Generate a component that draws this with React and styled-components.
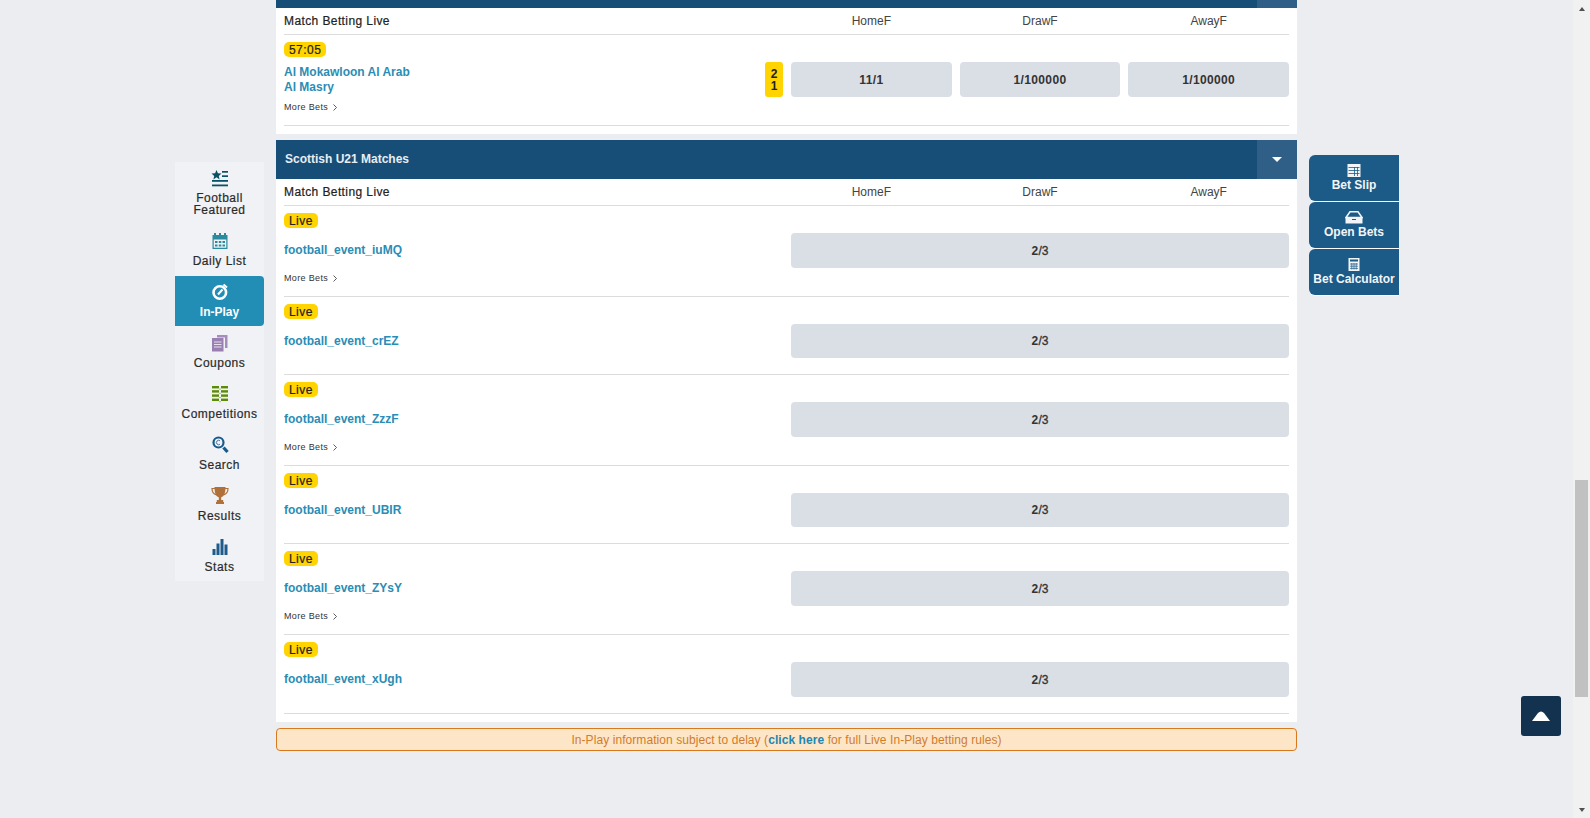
import styled, { createGlobalStyle } from 'styled-components';

const Global = createGlobalStyle`
  html, body {
    margin: 0;
    height: 100%;
    overflow: hidden;
    background: #ecedf1;
    font-family: "Liberation Sans", Arial, sans-serif;
    font-size: 12px;
    color: #222;
  }
`;

const Shell = styled.div`
  display: flex;
  height: 100vh;
  overflow: hidden;
`;

const Page = styled.div`
  position: relative;
  flex: 1;
  display: flex;
  align-items: flex-start;
  padding-left: 175px;
  gap: 12px;
  overflow: hidden;
`;

const SideNav = styled.nav`
  width: 89px;
  margin-top: 162px;
  display: flex;
  flex-direction: column;
  flex: none;
`;

const NavItem = styled.a`
  height: ${(p) => p.$height}px;
  box-sizing: border-box;
  padding-top: ${(p) => (p.$active ? 7 : 8)}px;
  display: flex;
  flex-direction: column;
  align-items: center;
  background: ${(p) => (p.$active ? '#228db5' : '#f0f2f5')};
  border-radius: ${(p) => (p.$active ? '0 4px 4px 0' : '0')};
  color: ${(p) => (p.$active ? '#fff' : '#2a2a2a')};
  font-weight: ${(p) => (p.$active ? 'bold' : 'normal')};
  -webkit-text-stroke: ${(p) => (p.$active ? '0' : '0.2px')};
  text-align: center;
  line-height: 12px;
  letter-spacing: ${(p) => (p.$active ? '0' : '0.5px')};

  svg {
    width: 18px;
    height: 18px;
    margin-bottom: ${(p) => (p.$tight ? 4 : 5)}px;
    flex: none;
  }
`;

const Content = styled.main`
  width: 1021px;
  flex: none;
  margin-top: -31px;
`;

const Section = styled.section`
  background: #fff;
  margin-bottom: 6px;
  padding-bottom: 8px;
`;

const SectionHead = styled.div`
  height: 39px;
  display: flex;
  align-items: center;
  justify-content: space-between;
  padding-left: 9px;
  background: #174e78;
  color: #e8edf2;
  font-weight: bold;
`;

const HeadTitle = styled.span`
  margin-bottom: 2px;
`;

const Toggle = styled.span`
  width: 40px;
  height: 100%;
  display: flex;
  align-items: center;
  justify-content: center;
  background: #2f5f86;

  &::after {
    content: '';
    border-left: 5.5px solid transparent;
    border-right: 5.5px solid transparent;
    border-top: 5px solid #fff;
  }
`;

const Body = styled.div`
  margin: 0 8px;
`;

const MarketHead = styled.div`
  height: 26px;
  display: flex;
  align-items: center;
  border-bottom: 1px solid #dcdcdc;
  color: #444;
`;

const MarketName = styled.span`
  flex: 1;
  color: #222;
  letter-spacing: 0.4px;
  -webkit-text-stroke: 0.2px;
`;

const ColLabel = styled.span`
  width: 160.67px;
  margin-left: 8px;
  text-align: center;
`;

const Row = styled.div`
  padding: 7px 0 ${(p) => p.$bottom || 15}px;
  border-bottom: 1px solid #dcdcdc;
`;

const Badge = styled.span`
  display: block;
  width: fit-content;
  height: 15px;
  line-height: 16px;
  padding: 0 5px;
  border-radius: 5px;
  background: #ffd400;
  color: #222;
  letter-spacing: 0.45px;
  -webkit-text-stroke: 0.2px;
`;

const MatchLine = styled.div`
  display: flex;
  align-items: center;
  height: ${(p) => (p.$compact ? 34 : 35)}px;
  margin-top: 5px;
`;

const Teams = styled.a`
  flex: 1;
  color: #2a8db5;
  font-weight: bold;
  line-height: 15px;
`;

const Score = styled.span`
  width: 18px;
  height: 35px;
  margin-right: 8px;
  display: flex;
  flex-direction: column;
  align-items: center;
  justify-content: center;
  border-radius: 3px;
  background: #ffd400;
  font-weight: bold;
  line-height: 12px;
`;

const Odds = styled.button`
  width: ${(p) => (p.$wide ? '498px' : '160.67px')};
  height: 100%;
  margin-left: ${(p) => (p.$gap ? '8px' : '0')};
  padding: 0;
  border: 0;
  border-radius: 4px;
  background: #dadee5;
  font: bold 12px "Liberation Sans", Arial, sans-serif;
  letter-spacing: 0.35px;
  color: #333;
`;

const OddsRest = styled.span`
  font-weight: normal;
  -webkit-text-stroke: 0.3px;
  letter-spacing: 0;
`;

const MoreBets = styled.a`
  display: flex;
  align-items: center;
  gap: 5px;
  height: 13px;
  line-height: 13px;
  margin: 4px 0 -4px;
  font-size: 9px;
  letter-spacing: 0.35px;
  color: #333;

  svg {
    width: 4px;
    height: 7px;
  }
`;

const Notice = styled.div`
  height: 23px;
  line-height: 22px;
  box-sizing: border-box;
  border: 1px solid #d9791e;
  border-radius: 4px;
  background: #fde6c8;
  color: #d17c2c;
  text-align: center;
  letter-spacing: 0.07px;

  a {
    color: #1f86b0;
    font-weight: bold;
  }
`;

const BetTools = styled.aside`
  width: 90px;
  margin-top: 155px;
  flex: none;
  display: flex;
  flex-direction: column;
  gap: 1px;
`;

const ToolButton = styled.a`
  height: 46px;
  box-sizing: border-box;
  padding-top: 9px;
  display: flex;
  flex-direction: column;
  align-items: center;
  background: #1c5a87;
  color: #f2f5f8;
  font-weight: bold;
  line-height: 12px;
  border-radius: 6px 0 0 6px;
  box-shadow: 0 1px 0 #fbfcfd;

  svg {
    width: ${(p) => p.$iconWidth || 14}px;
    height: 13px;
    margin-bottom: 2px;
    flex: none;
  }
`;

const ScrollTop = styled.button`
  position: absolute;
  left: 1521px;
  top: 696px;
  width: 40px;
  height: 40px;
  padding: 0;
  border: 0;
  border-radius: 3px;
  background: #12324f;
  display: flex;
  align-items: center;
  justify-content: center;

  svg {
    width: 18px;
    height: 10px;
  }
`;

const ScrollBar = styled.div`
  width: 17px;
  flex: none;
  background: #f1f1f1;
  display: flex;
  flex-direction: column;
  align-items: center;
`;

const Arrow = styled.span`
  flex: none;
  width: 0;
  height: 0;
  margin: ${(p) => (p.$up ? '7px 0 0' : 'auto 0 6px')};
  border-left: 3.5px solid transparent;
  border-right: 3.5px solid transparent;
  ${(p) => (p.$up ? 'border-bottom: 4px solid #505050;' : 'border-top: 4px solid #505050;')}
`;

const Thumb = styled.div`
  width: 13px;
  height: 217px;
  margin-top: 469px;
  background: #c1c1c1;
  flex: none;
`;

const FeaturedIcon = () => (
  <svg viewBox="0 0 18 18" fill="#0b5166">
    <path d="M5.500 0l1.400 3.300 3.600.3-2.700 2.300.8 3.500L5.500 7.300 2.400 9.400l.8-3.500L.5 3.600l3.600-.3z" />
    <rect x="11" y="1" width="6" height="1.700" />
    <rect x="11" y="5.300" width="6" height="1.700" />
    <rect x="1" y="10" width="16" height="1.800" />
    <rect x="1" y="14.500" width="16" height="1.800" />
  </svg>
);

const CalendarIcon = () => (
  <svg viewBox="0 0 18 18" fill="#2a8a9f">
    <path d="M1.500 3H3V1h2v2h3V1h2v2h3V1h2v2h1.500v14h-15zm1.200 4.500v8.300h12.600V7.500z" />
    <rect x="4" y="9" width="2.500" height="2" />
    <rect x="7.800" y="9" width="2.500" height="2" />
    <rect x="11.500" y="9" width="2.500" height="2" />
    <rect x="4" y="12.500" width="2.500" height="2" />
    <rect x="7.800" y="12.500" width="2.500" height="2" />
    <rect x="11.500" y="12.500" width="2.500" height="2" />
  </svg>
);

const WatchIcon = () => (
  <svg viewBox="0 0 18 18" fill="none" stroke="#fff">
    <circle cx="8.800" cy="9.500" r="6.300" strokeWidth="2.600" />
    <path d="M7 11.500L11.500 6.500" strokeWidth="2" />
    <path d="M12.500 1.500l3.500 3" strokeWidth="2" />
  </svg>
);

const CouponIcon = () => (
  <svg viewBox="0 0 18 18">
    <path d="M6 1h10.500v13H14V3.500H6z" fill="#a58cbd" />
    <path d="M1 4h11.500v13.500H1z" fill="#9a7fb3" />
    <path d="M3 8h7.500M3 10.500h7.500M3 13h7.500" stroke="#e8e0ef" strokeWidth="1" />
  </svg>
);

const CompetitionIcon = () => (
  <svg viewBox="0 0 18 18" fill="#5c8c04">
    {[1, 5.2, 9.4, 13.600].map((y) => (
      <g key={y}>
        <rect x="1" y={y} width="7" height="2.400" />
        <rect x="10" y={y} width="7" height="2.400" />
        <rect x="8.500" y={y + 2.600} width="1" height="1" />
      </g>
    ))}
  </svg>
);

const SearchIcon = () => (
  <svg viewBox="0 0 18 18" fill="none" stroke="#175a8c">
    <circle cx="7.500" cy="6.500" r="5" strokeWidth="2.200" />
    <path d="M9 4.800a2.200 2.200 0 1 0 0 3.400" strokeWidth=".8" />
    <path d="M12.500 11.500l4 4.500" strokeWidth="3.200" />
  </svg>
);

const TrophyIcon = () => (
  <svg viewBox="0 0 18 18">
    <path d="M3.500 0h11c0 5.500-1 9-4.300 10.300V13h2v2H13v2H5v-2h.800v-2h2v-2.700C4.500 9 3.500 5.500 3.500 0z" fill="#b0703a" />
    <path d="M4 1.500H1c0 3.500 1.800 5.500 4.500 6.300M14 1.500h3c0 3.500-1.800 5.500-4.500 6.300" fill="none" stroke="#b0703a" strokeWidth="1.200" />
  </svg>
);

const StatsIcon = () => (
  <svg viewBox="0 0 18 18" fill="#1e5a8a">
    <rect x="1.500" y="11" width="3" height="6" />
    <rect x="5.500" y="5.500" width="3" height="11.500" />
    <rect x="9.500" y="1" width="3" height="16" />
    <rect x="13.500" y="6.500" width="3" height="10.500" />
  </svg>
);

const SlipIcon = () => (
  <svg viewBox="0 0 14 13">
    <rect x="0.500" y="0" width="13" height="13" fill="#f2f5f8" />
    <path d="M7.500 3v9M10.500 3v9M1.500 3.500h11M1.500 6.500h11M1.500 9.500h11" stroke="#1c5a87" strokeWidth=".8" />
  </svg>
);

const TrayIcon = () => (
  <svg viewBox="0 0 18 13">
    <path d="M5 .8h8l4 5.700H1z" fill="none" stroke="#f2f5f8" strokeWidth="1.500" />
    <path d="M.500 6.500h17V12.500H.500z" fill="#f2f5f8" />
    <rect x="7" y="8" width="4" height="1" fill="#1c5a87" />
  </svg>
);

const CalcIcon = () => (
  <svg viewBox="0 0 14 13">
    <rect x="1.500" y="0" width="11" height="13" fill="#f2f5f8" />
    <rect x="3" y="1.500" width="8" height="2" fill="#1c5a87" />
    <path d="M3 6h8M3 8.200h8M3 10.400h8M4.800 5v6.500M7 5v6.500M9.200 5v6.500" stroke="#1c5a87" strokeWidth=".7" />
  </svg>
);

const Chevron = () => (
  <svg viewBox="0 0 4 7" fill="none" stroke="#333" strokeWidth=".8">
    <path d="M.5 .5l3 3-3 3" />
  </svg>
);

const navItems = [
  { label: <>Football<br />Featured</>, icon: <FeaturedIcon />, height: 62, tight: true },
  { label: 'Daily List', icon: <CalendarIcon />, height: 52 },
  { label: 'In-Play', icon: <WatchIcon />, height: 50, active: true },
  { label: 'Coupons', icon: <CouponIcon />, height: 51 },
  { label: 'Competitions', icon: <CompetitionIcon />, height: 51 },
  { label: 'Search', icon: <SearchIcon />, height: 51 },
  { label: 'Results', icon: <TrophyIcon />, height: 51 },
  { label: 'Stats', icon: <StatsIcon />, height: 51 },
];

const events = [
  { name: 'football_event_iuMQ', more: true },
  { name: 'football_event_crEZ', compact: true, bottom: 16 },
  { name: 'football_event_ZzzF', more: true },
  { name: 'football_event_UBIR', compact: true, bottom: 16 },
  { name: 'football_event_ZYsY', more: true },
  { name: 'football_event_xUgh', bottom: 16 },
];

function Market() {
  return (
    <MarketHead>
      <MarketName>Match Betting Live</MarketName>
      <ColLabel>HomeF</ColLabel>
      <ColLabel>DrawF</ColLabel>
      <ColLabel>AwayF</ColLabel>
    </MarketHead>
  );
}

function More() {
  return <MoreBets>More Bets <Chevron /></MoreBets>;
}

export default function App() {
  return (
    <Shell>
      <Global />
      <Page>
        <SideNav>
          {navItems.map((item, i) => (
            <NavItem key={i} $height={item.height} $tight={item.tight} $active={item.active}>
              {item.icon}
              {item.label}
            </NavItem>
          ))}
        </SideNav>

        <Content>
          <Section>
            <SectionHead>
              <span />
              <Toggle />
            </SectionHead>
            <Body>
              <Market />
              <Row>
                <Badge>57:05</Badge>
                <MatchLine>
                  <Teams>Al Mokawloon Al Arab<br />Al Masry</Teams>
                  <Score><span>2</span><span>1</span></Score>
                  <Odds>11/1</Odds>
                  <Odds $gap>1/100000</Odds>
                  <Odds $gap>1/100000</Odds>
                </MatchLine>
                <More />
              </Row>
            </Body>
          </Section>

          <Section>
            <SectionHead>
              <HeadTitle>Scottish U21 Matches</HeadTitle>
              <Toggle />
            </SectionHead>
            <Body>
              <Market />
              {events.map((ev) => (
                <Row key={ev.name} $bottom={ev.bottom}>
                  <Badge>Live</Badge>
                  <MatchLine $compact={ev.compact}>
                    <Teams>{ev.name}</Teams>
                    <Odds $wide>2<OddsRest>/3</OddsRest></Odds>
                  </MatchLine>
                  {ev.more && <More />}
                </Row>
              ))}
            </Body>
          </Section>

          <Notice>
            In-Play information subject to delay (<a>click here</a> for full Live In-Play betting rules)
          </Notice>
        </Content>

        <BetTools>
          <ToolButton><SlipIcon />Bet Slip</ToolButton>
          <ToolButton $iconWidth={18}><TrayIcon />Open Bets</ToolButton>
          <ToolButton><CalcIcon />Bet Calculator</ToolButton>
        </BetTools>

        <ScrollTop>
          <svg viewBox="0 0 18 10"><path d="M0 10L6 2q3-3 6 0l6 8z" fill="#fff" /></svg>
        </ScrollTop>
      </Page>
      <ScrollBar>
        <Arrow $up />
        <Thumb />
        <Arrow />
      </ScrollBar>
    </Shell>
  );
}
